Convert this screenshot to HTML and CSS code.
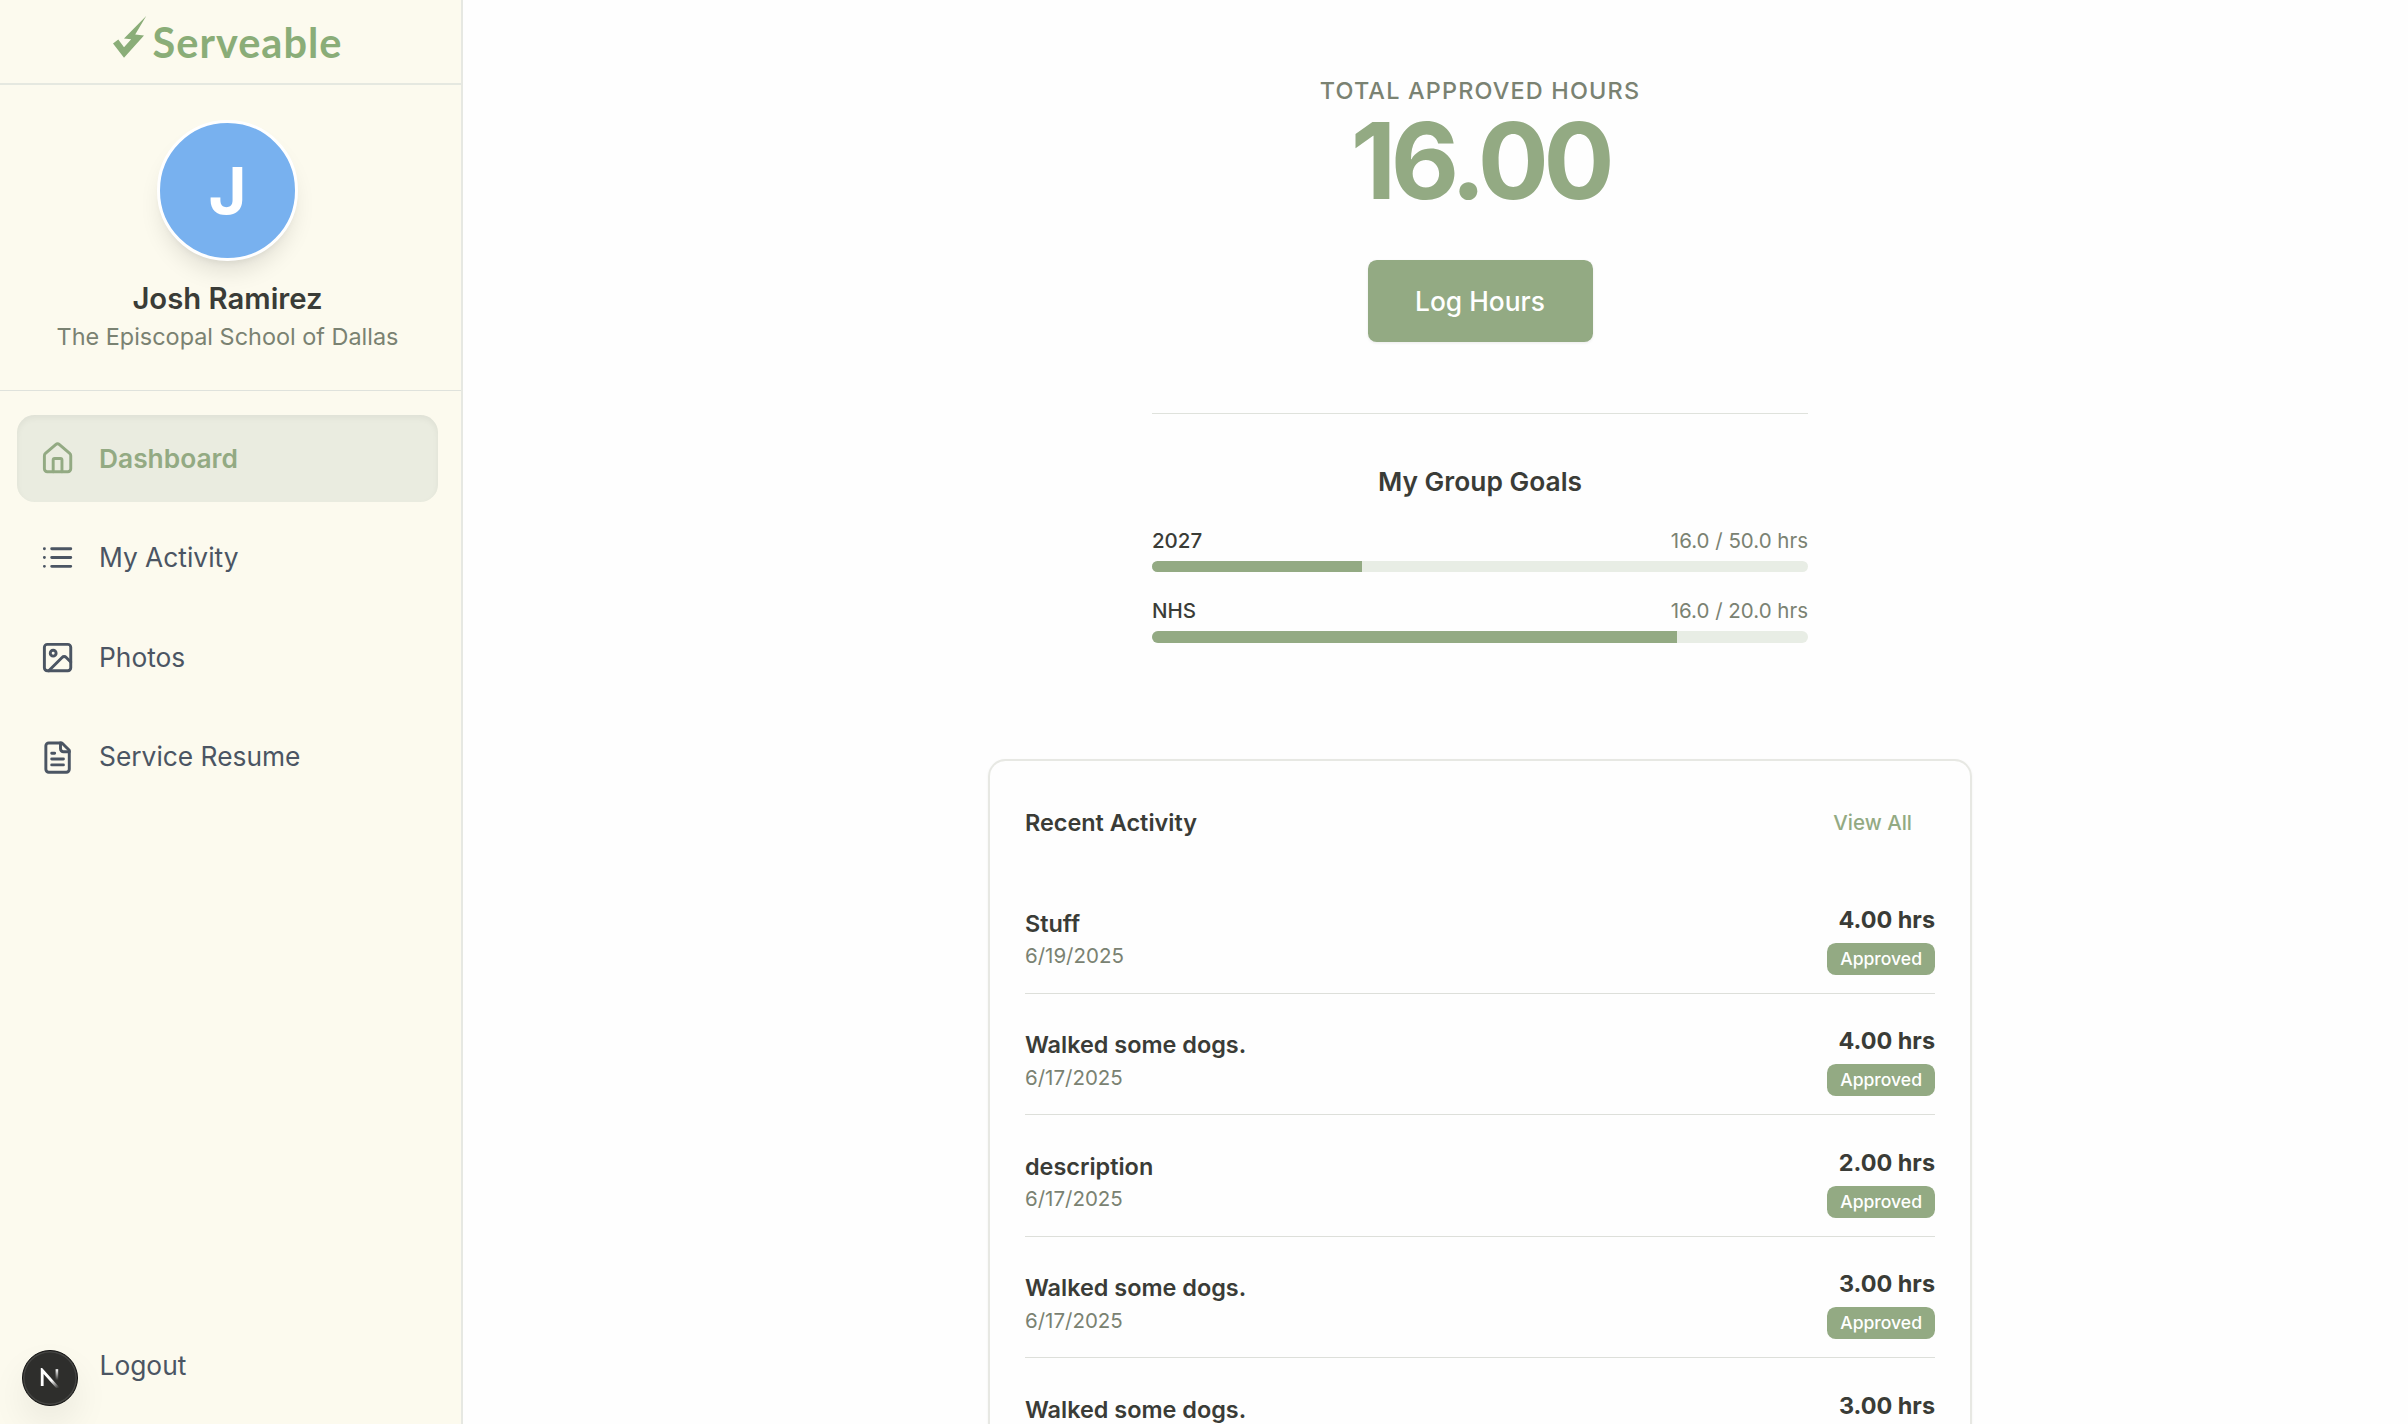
FILE: index.html
```html
<!DOCTYPE html>
<html lang="en">
<head>
    <meta charset="UTF-8">
    <meta name="viewport" content="width=device-width, initial-scale=1.0">
    <title>Serveable - Dashboard</title>
    <link rel="stylesheet" href="styles.css">
</head>
<body>
    <aside class="sidebar">
        <div class="brand">
            <svg class="brand-mark" viewBox="0 0 34 42" aria-hidden="true">
                <path d="M33.2 0 L11 22.6 L18.2 23.2 L11 31.2 L5.3 23.6 L0 27.6 L11 41.8 L31 19.6 L22.2 18.6 Z"/>
            </svg>
            <span class="brand-name">Serveable</span>
        </div>
        <div class="profile">
            <div class="avatar">J</div>
            <div class="profile-name">Josh Ramirez</div>
            <div class="profile-school">The Episcopal School of Dallas</div>
        </div>
        <nav class="nav">
            <a class="nav-item active">
                <svg class="icon" viewBox="0 0 24 24">
                    <path d="M15 21v-8a1 1 0 0 0-1-1h-4a1 1 0 0 0-1 1v8"/>
                    <path d="M3 10a2 2 0 0 1 .709-1.528l7-5.999a2 2 0 0 1 2.582 0l7 5.999A2 2 0 0 1 21 10v9a2 2 0 0 1-2 2H5a2 2 0 0 1-2-2z"/>
                </svg>
                Dashboard
            </a>
            <a class="nav-item">
                <svg class="icon" viewBox="0 0 24 24">
                    <path d="M3 12h.01M3 18h.01M3 6h.01M8 12h13M8 18h13M8 6h13"/>
                </svg>
                My Activity
            </a>
            <a class="nav-item">
                <svg class="icon" viewBox="0 0 24 24">
                    <rect width="18" height="18" x="3" y="3" rx="2"/>
                    <circle cx="9" cy="9" r="2"/>
                    <path d="m21 15-3.086-3.086a2 2 0 0 0-2.828 0L6 21"/>
                </svg>
                Photos
            </a>
            <a class="nav-item">
                <svg class="icon" viewBox="0 0 24 24">
                    <path d="M15 2H6a2 2 0 0 0-2 2v16a2 2 0 0 0 2 2h12a2 2 0 0 0 2-2V7Z"/>
                    <path d="M14 2v4a2 2 0 0 0 2 2h4M10 9H8M16 13H8M16 17H8"/>
                </svg>
                Service Resume
            </a>
        </nav>
        <a class="logout">Logout</a>
    </aside>

    <main class="main">
        <section class="summary">
            <div class="summary-label">Total Approved Hours</div>
            <div class="summary-hours">16.00</div>
            <button class="log-button">Log Hours</button>
        </section>

        <section class="goals">
            <h2>My Group Goals</h2>
            <div class="goal">
                <div class="goal-text"><span>2027</span><span class="goal-hours">16.0 / 50.0 hrs</span></div>
                <div class="track"><div class="fill" style="width: 32%"></div></div>
            </div>
            <div class="goal">
                <div class="goal-text"><span>NHS</span><span class="goal-hours">16.0 / 20.0 hrs</span></div>
                <div class="track"><div class="fill" style="width: 80%"></div></div>
            </div>
        </section>

        <section class="card">
            <div class="card-header">
                <h3>Recent Activity</h3>
                <a class="view-all">View All</a>
            </div>
            <div class="row">
                <div>
                    <div class="row-title">Stuff</div>
                    <div class="row-date">6/19/2025</div>
                </div>
                <div class="row-right">
                    <div class="row-hours">4.00 hrs</div>
                    <div class="badge">Approved</div>
                </div>
            </div>
            <div class="row">
                <div>
                    <div class="row-title">Walked some dogs.</div>
                    <div class="row-date">6/17/2025</div>
                </div>
                <div class="row-right">
                    <div class="row-hours">4.00 hrs</div>
                    <div class="badge">Approved</div>
                </div>
            </div>
            <div class="row">
                <div>
                    <div class="row-title">description</div>
                    <div class="row-date">6/17/2025</div>
                </div>
                <div class="row-right">
                    <div class="row-hours">2.00 hrs</div>
                    <div class="badge">Approved</div>
                </div>
            </div>
            <div class="row">
                <div>
                    <div class="row-title">Walked some dogs.</div>
                    <div class="row-date">6/17/2025</div>
                </div>
                <div class="row-right">
                    <div class="row-hours">3.00 hrs</div>
                    <div class="badge">Approved</div>
                </div>
            </div>
            <div class="row">
                <div>
                    <div class="row-title">Walked some dogs.</div>
                    <div class="row-date">6/17/2025</div>
                </div>
                <div class="row-right">
                    <div class="row-hours">3.00 hrs</div>
                    <div class="badge">Approved</div>
                </div>
            </div>
        </section>
    </main>

    <div class="dev-badge">
        <svg viewBox="0 0 20 20" aria-hidden="true">
            <defs>
                <linearGradient id="fade-right" x1="0" y1="0" x2="0" y2="1">
                    <stop offset="0" stop-color="#fff"/>
                    <stop offset="1" stop-color="#fff" stop-opacity="0"/>
                </linearGradient>
                <linearGradient id="fade-end" gradientUnits="userSpaceOnUse" x1="12" y1="12" x2="18" y2="19">
                    <stop offset="0" stop-color="#fff"/>
                    <stop offset="1" stop-color="#fff" stop-opacity="0.1"/>
                </linearGradient>
            </defs>
            <path d="M2.2 18V2.2L18 20" fill="none" stroke="url(#fade-end)" stroke-width="2.8"/>
            <rect x="15.6" y="1.2" width="2.6" height="11" fill="url(#fade-right)"/>
        </svg>
    </div>
</body>
</html>
```
FILE: styles.css
```css
* {
    box-sizing: border-box;
}
html {
    font-size: 23.43px;
}
body {
    margin: 0;
    height: 1424px;
    display: flex;
    overflow: hidden;
    font-family: Inter, "Liberation Sans", sans-serif;
    line-height: 1.5;
    color: #3a3c37;
    background-color: #fefefe;
}
h2, h3 {
    margin: 0;
    font-weight: 600;
}

/* Sidebar */
.sidebar {
    width: 463px;
    flex-shrink: 0;
    display: flex;
    flex-direction: column;
    background-color: #fcfaee;
    border-right: 2px solid #e6e8e2;
}
.brand {
    height: 85px;
    padding: 0 6px 0 0;
    display: flex;
    justify-content: center;
    gap: 6px;
    border-bottom: 2px solid #e5e8e0;
}
.brand-mark {
    width: 34px;
    height: 42px;
    margin-top: 16px;
    fill: #8aad78;
}
.brand-name {
    font-family: Lato, sans-serif;
    font-weight: 700;
    font-size: 41.5px;
    line-height: 50px;
    margin-top: 17px;
    letter-spacing: 1px;
    color: #8aad78;
}
.profile {
    height: 306px;
    padding: 35px 6px 0 0;
    display: flex;
    flex-direction: column;
    align-items: center;
    border-bottom: 1px solid #dfe2dc;
}
.avatar {
    width: 6rem;
    height: 6rem;
    border: 3px solid #fff;
    border-radius: 50%;
    background-color: #78b1ef;
    color: #fff;
    font-size: 65px;
    font-weight: 700;
    display: flex;
    align-items: center;
    justify-content: center;
    box-shadow: 0 15px 22px -4px rgba(0, 0, 0, 0.1), 0 6px 9px -6px rgba(0, 0, 0, 0.1);
}
.profile-name {
    margin-top: 17px;
    font-size: 1.25rem;
    font-weight: 600;
    line-height: 1.75rem;
}
.profile-school {
    font-size: 1rem;
    line-height: 1.5rem;
    color: #7a8272;
}
.nav {
    padding: 23.5px 23.5px 0 17px;
    display: flex;
    flex-direction: column;
    gap: 0.5rem;
}
.nav-item {
    height: 3.75rem;
    padding: 0 1rem;
    display: flex;
    align-items: center;
    gap: 1rem;
    border-radius: 0.75rem;
    font-size: 1.125rem;
    font-weight: 400;
    color: #4b5563;
}
.nav-item.active {
    background-color: #eaece0;
    box-shadow: inset 0 3px 6px rgba(0, 0, 0, 0.05);
    color: #93aa83;
    font-weight: 600;
}
.icon {
    width: 1.5rem;
    height: 1.5rem;
    fill: none;
    stroke: currentColor;
    stroke-width: 2;
    stroke-linecap: round;
    stroke-linejoin: round;
}
.logout {
    margin: auto 0 38px 99.5px;
    font-size: 1.125rem;
    font-weight: 400;
    color: #4b5563;
}

/* Main column */
.main {
    flex: 1;
    padding: 73px 0 0 89px;
    display: flex;
    flex-direction: column;
    align-items: center;
}
.summary {
    width: 28rem;
    height: 341px;
    flex-shrink: 0;
    display: flex;
    flex-direction: column;
    align-items: center;
    border-bottom: 1px solid #dfe2dc;
}
.summary-label {
    font-weight: 500;
    letter-spacing: 0.05em;
    text-transform: uppercase;
    color: #7a8272;
}
.summary-hours {
    font-size: 4.5rem;
    font-weight: 700;
    line-height: 1;
    letter-spacing: -0.05em;
    color: #93aa83;
}
.log-button {
    width: 225px;
    height: 82px;
    margin-top: 46.5px;
    border: none;
    border-radius: 0.375rem;
    background-color: #93aa83;
    color: #fff;
    font-family: inherit;
    font-size: 1.125rem;
    font-weight: 500;
    box-shadow: 0 1px 3px rgba(0, 0, 0, 0.08);
}
.goals {
    width: 28rem;
    height: 345px;
    flex-shrink: 0;
    padding-top: 47px;
}
.goals h2 {
    font-size: 1.125rem;
    line-height: 1.75rem;
    text-align: center;
}
.goal {
    height: 3rem;
}
.goals h2 + .goal {
    margin-top: 23.5px;
}
.goal-text {
    display: flex;
    justify-content: space-between;
    font-size: 0.875rem;
    font-weight: 500;
    line-height: 1.25rem;
}
.goal-hours {
    color: #7a8272;
    font-weight: 400;
}
.track {
    height: 0.5rem;
    margin-top: 0.25rem;
    border-radius: 1rem;
    background-color: #e8ede5;
    overflow: hidden;
}
.fill {
    height: 100%;
    background-color: #93aa83;
}

/* Recent activity */
.card {
    width: 42rem;
    height: 665px;
    flex-shrink: 0;
    overflow: hidden;
    padding: 0 35px;
    border: 2px solid #e7e8e3;
    border-bottom: none;
    border-radius: 0.75rem 0.75rem 0 0;
    box-shadow: 0 1px 3px rgba(0, 0, 0, 0.05);
}
.card-header {
    height: 111px;
    padding: 12px 23px 0 0;
    display: flex;
    justify-content: space-between;
    align-items: center;
}
.card-header h3 {
    font-size: 1rem;
}
.view-all {
    padding-top: 1px;
    font-size: 0.875rem;
    font-weight: 500;
    color: #93aa83;
}
.row {
    height: 121.5px;
    padding: 1.25rem 0 0.75rem;
    display: flex;
    justify-content: space-between;
    align-items: center;
    border-bottom: 1px solid #dddfda;
}
.row-title {
    font-weight: 600;
}
.row-date {
    font-size: 0.875rem;
    line-height: 1.25rem;
    color: #7a8272;
}
.row-right {
    display: flex;
    flex-direction: column;
    align-items: flex-end;
}
.row-hours {
    font-weight: 700;
}
.badge {
    margin-top: 6px;
    padding: 0 13px;
    border-radius: 0.375rem;
    background-color: #93aa83;
    color: #fff;
    font-size: 0.75rem;
    font-weight: 500;
    line-height: 32px;
}

/* Dev tools indicator, floats over the sidebar */
.dev-badge {
    position: absolute;
    left: 22px;
    bottom: 18px;
    width: 56px;
    height: 56px;
    display: flex;
    align-items: center;
    justify-content: center;
    border-radius: 50%;
    background-color: #2e2e2c;
    border: 1px solid #111;
    box-shadow: inset 0 0 0 1.5px #454543, 0 18px 36px rgba(0, 0, 0, 0.07);
}
.dev-badge svg {
    width: 20px;
    height: 20px;
}
```
